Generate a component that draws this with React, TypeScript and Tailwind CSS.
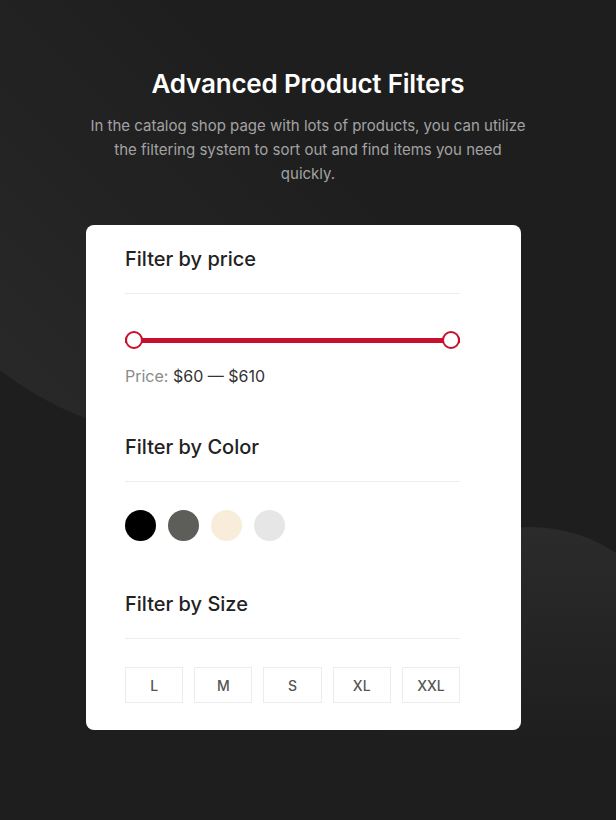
const swatches = ["#000000", "#5d5d59", "#f8eddb", "#e6e6e6"];
const sizes = ["L", "M", "S", "XL", "XXL"];

const FilterHeading = ({ title }: { title: string }) => (
  <>
    <h3 className="text-[20px] leading-[28px] font-medium text-[#222222]">{title}</h3>
    <div className="mt-[20px] h-px bg-[#ededed]" />
  </>
);

const App = () => {
  return (
    <section
      className="relative min-h-[820px] w-full overflow-hidden bg-[#1e1e1e]"
      style={{ fontFamily: "Inter, 'Noto Sans', sans-serif" }}
    >
      {/* Decorative blobs */}
      <div className="pointer-events-none absolute left-[-133px] top-[-241px] h-[682px] w-[682px] rounded-full bg-gradient-to-bl from-[#1e1e1e] from-45% to-[#2c2c2c]" />
      <div className="pointer-events-none absolute left-[375px] top-[527px] h-[310px] w-[310px] rounded-full bg-gradient-to-b from-[#2b2b2b] to-[#1e1e1e] to-70%" />

      <div className="relative flex flex-col items-center pt-[68px]">
        <h2 className="text-[26px] leading-[32px] font-semibold tracking-[-0.2px] text-white">
          Advanced Product Filters
        </h2>
        <p className="mt-[14px] w-[445px] text-center text-[15px] leading-[24px] text-[#a3a3a3]">
          In the catalog shop page with lots of products, you can utilize the filtering system to sort out and find
          items you need quickly.
        </p>

        {/* Filter card */}
        <div className="mr-[9px] mt-[39px] w-[435px] rounded-[8px] bg-white pb-[27px] pl-[39px] pt-[20px]">
          <div className="w-[335px]">
            <FilterHeading title="Filter by price" />

            <div className="relative mt-[36px] flex h-[20px] items-center">
              <div className="h-[5px] w-full bg-[#c8102e]" />
              <div className="absolute left-0 top-[1px] h-[18px] w-[18px] rounded-full border-2 border-[#c8102e] bg-white" />
              <div className="absolute right-0 top-[1px] h-[18px] w-[18px] rounded-full border-2 border-[#c8102e] bg-white" />
            </div>

            <p className="mt-[14px] text-[16px] leading-[24px] text-[#333333]">
              <span className="text-[#8a8a8a]">Price:</span> $60 — $610
            </p>

            <div className="mt-[45px]">
              <FilterHeading title="Filter by Color" />
            </div>
            <div className="mt-[28px] flex gap-[12px]">
              {swatches.map((c) => (
                <span key={c} className="h-[31px] w-[31px] rounded-full" style={{ backgroundColor: c }} />
              ))}
            </div>

            <div className="mt-[49px]">
              <FilterHeading title="Filter by Size" />
            </div>
            <div className="mt-[28px] grid grid-cols-5 gap-[11px]">
              {sizes.map((s) => (
                <button
                  key={s}
                  className="flex h-[36px] items-center justify-center border border-[#ececec] text-[14px] font-medium text-[#555555]"
                >
                  {s}
                </button>
              ))}
            </div>
          </div>
        </div>
      </div>
    </section>
  );
};

export default App;
